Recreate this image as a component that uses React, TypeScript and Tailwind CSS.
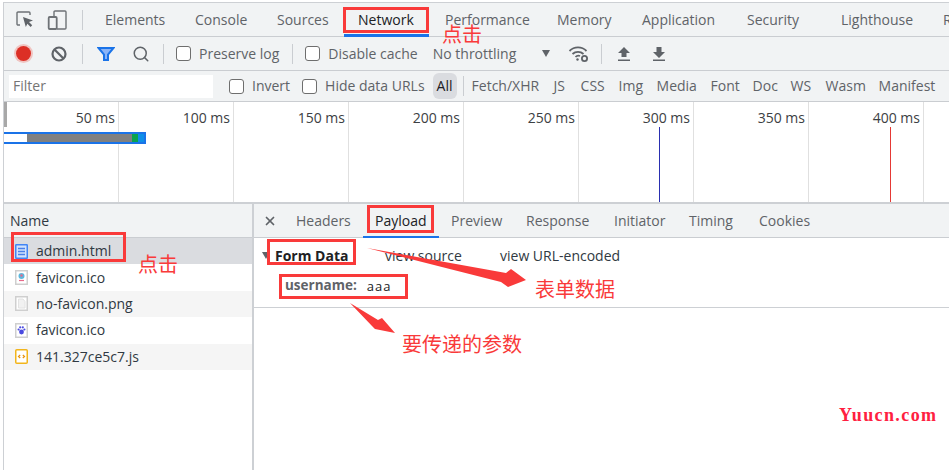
import { Search, X } from "lucide-react";

const FONT = "font-['Open_Sans','Noto_Sans',sans-serif]";

const tabs = [
  { label: "Elements", w: "w-[90px]" },
  { label: "Console", w: "w-[82px]" },
  { label: "Sources", w: "w-[81px]" },
  { label: "Network", w: "w-[87px]", active: true },
  { label: "Performance", w: "w-[112px]" },
  { label: "Memory", w: "w-[85px]" },
  { label: "Application", w: "w-[105px]" },
  { label: "Security", w: "w-[94px]" },
  { label: "Lighthouse", w: "w-[102px]" },
  { label: "R", w: "w-[10px]" },
];

const filters = [
  { label: "Fetch/XHR", w: "w-[82px]" },
  { label: "JS", w: "w-[27px]" },
  { label: "CSS", w: "w-[38px]" },
  { label: "Img", w: "w-[38px]" },
  { label: "Media", w: "w-[54px]" },
  { label: "Font", w: "w-[42px]" },
  { label: "Doc", w: "w-[38px]" },
  { label: "WS", w: "w-[35px]" },
  { label: "Wasm", w: "w-[53px]" },
  { label: "Manifest", w: "w-[62px]" },
];

const ticks = ["50 ms", "100 ms", "150 ms", "200 ms", "250 ms", "300 ms", "350 ms", "400 ms"];

const detailTabs = [
  { label: "Headers", w: "w-[79px]" },
  { label: "Payload", w: "w-[76px]", active: true },
  { label: "Preview", w: "w-[75px]" },
  { label: "Response", w: "w-[88px]" },
  { label: "Initiator", w: "w-[75px]" },
  { label: "Timing", w: "w-[70px]" },
  { label: "Cookies", w: "w-[60px]" },
];

function Checkbox() {
  return <span className="block w-[15px] h-[15px] rounded-[3px] border border-[#6e6e6e] bg-white shrink-0" />;
}

function FileIcon({ kind }: { kind: string }) {
  if (kind === "doc") {
    return (
      <svg width="13" height="15" viewBox="0 0 13 15" className="shrink-0">
        <rect x="0.75" y="0.75" width="11.5" height="13.5" rx="0.5" fill="#d2e3fc" stroke="#4285f4" strokeWidth="1.5" />
        <path d="M3 4.500h7M3 7.500h7M3 10.500h7" stroke="#4a80e8" strokeWidth="1.3" />
      </svg>
    );
  }
  if (kind === "js") {
    return (
      <svg width="13" height="15" viewBox="0 0 13 15" className="shrink-0">
        <rect x="0.75" y="0.75" width="11.5" height="13.5" rx="1" fill="#fff" stroke="#f2b51c" strokeWidth="1.5" />
        <path d="M5.200 6 3.500 7.500 5.200 9M7.800 6l1.700 1.500L7.800 9" fill="none" stroke="#e8930c" strokeWidth="1.200" />
      </svg>
    );
  }
  return (
    <svg width="13" height="15" viewBox="0 0 13 15" className="shrink-0">
      <rect x="0.75" y="0.75" width="11.5" height="13.5" fill="#fff" stroke="#cfcfcf" strokeWidth="1.5" />
      {kind === "fav1" && (
        <>
          <circle cx="6.500" cy="6" r="3" fill="#5cb8de" />
          <circle cx="6.500" cy="5.500" r="1.200" fill="#e86a8a" />
          <path d="M4 10.500h5" stroke="#e86a8a" strokeWidth="1.200" />
        </>
      )}
      {kind === "fav2" && (
        <>
          <circle cx="6.500" cy="9" r="2.400" fill="#4a4ae0" />
          <circle cx="3.600" cy="6.500" r="1.100" fill="#4a4ae0" />
          <circle cx="9.400" cy="6.500" r="1.100" fill="#4a4ae0" />
          <circle cx="5.200" cy="4.300" r="1.100" fill="#4a4ae0" />
          <circle cx="7.800" cy="4.300" r="1.100" fill="#4a4ae0" />
        </>
      )}
      {kind === "blank" && <path d="M3.500 3H8l2 2.500V12H3.500z" fill="#f1f1f1" stroke="#e2e2e2" />}
    </svg>
  );
}

const files = [
  { name: "admin.html", kind: "doc", bg: "bg-[#dadce0]" },
  { name: "favicon.ico", kind: "fav1", bg: "bg-white" },
  { name: "no-favicon.png", kind: "blank", bg: "bg-[#f5f5f5]" },
  { name: "favicon.ico", kind: "fav2", bg: "bg-white" },
  { name: "141.327ce5c7.js", kind: "js", bg: "bg-[#f5f5f5]" },
];

function Arrow({ className, points, w, h }: { className: string; points: string; w: number; h: number }) {
  return (
    <svg className={`absolute ${className}`} width={w} height={h} viewBox={`0 0 ${w} ${h}`}>
      <polygon points={points} fill="#f93a3a" />
    </svg>
  );
}

export default function App() {
  return (
    <div className={`relative w-[949px] h-[470px] overflow-hidden bg-white pt-[2px] pl-[3px] text-[14px] leading-none text-[#5f6368] ${FONT}`}>
      <div className="h-full flex flex-col border-l border-t border-[#cdd0d4]">
        {/* Tabs */}
        <div className="h-[34px] shrink-0 flex items-center bg-[#f1f3f4] border-b border-[#cacdd1]">
          <svg width="20" height="20" viewBox="0 0 20 20" className="shrink-0 ml-[11px] mr-[12px]" fill="none">
            <path d="M5 15H3a1 1 0 0 1-1-1V3a1 1 0 0 1 1-1h11a1 1 0 0 1 1 1v2" stroke="#6e7276" strokeWidth="1.400" />
            <path d="M8 7l10 3.500-4 1.600 3.200 3.200-1.600 1.600-3.200-3.200L10.800 17z" fill="#5f6368" />
          </svg>
          <svg width="20" height="20" viewBox="0 0 20 20" className="shrink-0" fill="none" stroke="#6e7276" strokeWidth="1.400">
            <path d="M7 6V2a1 1 0 0 1 1-1h10a1 1 0 0 1 1 1v16a1 1 0 0 1-1 1H10" />
            <rect x="1.700" y="7" width="8" height="12" rx="1" strokeWidth="1.800" />
          </svg>
          <div className="shrink-0 w-px h-5 bg-[#cacdd1] ml-[15px] mr-[22px]" />
          {tabs.map((t) => (
            <div
              key={t.label}
              className={`${t.w} shrink-0 h-full flex items-center relative whitespace-nowrap ${t.active ? "text-[#202124]" : ""}`}
            >
              {t.label}
              {t.active && <div className="absolute -left-[14px] -bottom-px w-[85px] h-[3px] bg-[#1a73e8]" />}
            </div>
          ))}
        </div>

        {/* Toolbar */}
        <div className="h-[34px] shrink-0 flex items-center bg-[#f1f3f4] border-b border-[#cacdd1]">
          <div className="ml-[12px] w-[15px] h-[15px] rounded-full bg-[#dc2f25] shadow-[0_0_0_2px_#f0c4c1]" />
          <svg width="16" height="16" viewBox="0 0 16 16" fill="none" stroke="#5f6368" strokeWidth="2.200" className="ml-[20px]">
            <circle cx="8" cy="8" r="6.500" />
            <path d="M3.500 3.500l9 9" />
          </svg>
          <div className="w-px h-5 bg-[#cacdd1] ml-[15px]" />
          <svg width="18" height="16" viewBox="0 0 18 16" fill="#8ab4f8" stroke="#1a73e8" strokeWidth="2" className="ml-[14px]">
            <path d="M1.500 2h15L11 8.500V14H7V8.500z" />
          </svg>
          <Search size={18} strokeWidth={2} className="text-[#5f6368] ml-[17px]" />
          <div className="w-px h-5 bg-[#cacdd1] ml-[13px]" />
          <div className="ml-[12px]"><Checkbox /></div>
          <span className="ml-[8px] whitespace-nowrap">Preserve log</span>
          <div className="w-px h-5 bg-[#cacdd1] ml-[13px]" />
          <div className="ml-[12px]"><Checkbox /></div>
          <span className="ml-[8px] whitespace-nowrap">Disable cache</span>
          <span className="ml-[15px] whitespace-nowrap">No throttling</span>
          <div className="ml-[26px] w-0 h-0 border-x-[4px] border-x-transparent border-t-[7px] border-t-[#5f6368]" />
          <svg width="22" height="18" viewBox="0 0 22 18" fill="none" stroke="#5f6368" strokeWidth="1.800" className="ml-[18px]">
            <path d="M1.500 6a12 12 0 0 1 17 0M4.500 9a8 8 0 0 1 11 0M7.500 12a4 4 0 0 1 4.500-1" />
            <circle cx="9.500" cy="14.500" r="1.200" fill="#5f6368" stroke="none" />
            <circle cx="16.500" cy="13.500" r="2.600" strokeWidth="1.800" />
          </svg>
          <div className="w-px h-5 bg-[#cacdd1] ml-[11px]" />
          <svg width="14" height="16" viewBox="0 0 14 16" fill="#5f6368" className="ml-[15px]">
            <path d="M7 1l6 6H9.500v4h-5V7H1zM1 13.500h12V15H1z" />
          </svg>
          <svg width="14" height="16" viewBox="0 0 14 16" fill="#5f6368" className="ml-[21px]">
            <path d="M4.500 1h5v5H13l-6 6-6-6h3.500zM1 13.500h12V15H1z" />
          </svg>
        </div>

        {/* Filter */}
        <div className="h-[31px] shrink-0 flex items-center bg-[#f1f3f4] border-b border-[#cacdd1]">
          <div className="ml-[5px] w-[204px] h-[23px] bg-white flex items-center pl-[4px] text-[#757575]">Filter</div>
          <div className="ml-[16px]"><Checkbox /></div>
          <span className="ml-[8px]">Invert</span>
          <div className="ml-[12px]"><Checkbox /></div>
          <span className="ml-[8px] whitespace-nowrap">Hide data URLs</span>
          <span className="ml-[8px] w-[24px] h-[26px] rounded-[6px] bg-[#dadce0] flex items-center justify-center text-[#202124]">All</span>
          <div className="w-px h-5 bg-[#cacdd1] ml-[6px] mr-[8px]" />
          {filters.map((f) => (
            <span key={f.label} className={`${f.w} shrink-0 whitespace-nowrap`}>{f.label}</span>
          ))}
        </div>

        {/* Overview timeline */}
        <div className="h-[102px] shrink-0 relative bg-white border-b-2 border-[#cdd0d4]">
          <div className="flex h-full">
            {ticks.map((t) => (
              <div key={t} className="w-[115px] shrink-0 h-full border-r border-[#e0e0e0] pt-[9px] pr-[3px] text-right text-[#3c4043] whitespace-nowrap">
                {t}
              </div>
            ))}
          </div>
          <div className="absolute left-0 top-0 w-[3px] h-[25px] bg-[#a8a8a8]" />
          <div className="absolute left-0 top-[30px] w-[142px] h-[12px] bg-[#1a73e8] py-[2px] pr-[2px] flex">
            <div className="w-[23px] bg-white" />
            <div className="w-[105px] bg-[#808080]" />
            <div className="w-[6px] bg-[#0aa34f]" />
            <div className="flex-1 bg-[#0e8fe8]" />
          </div>
          <div className="absolute left-[655px] top-[25px] w-px h-[75px] bg-[#2a2fb0]" />
          <div className="absolute left-[886px] top-[25px] w-px h-[75px] bg-[#e53935]" />
        </div>

        {/* Bottom split */}
        <div className="flex-1 flex min-h-0">
          <div className="w-[250px] shrink-0 border-r-2 border-[#cdd0d4]">
            <div className="h-[34px] bg-[#f1f3f4] border-b border-[#cacdd1] flex items-end pl-[6px] pb-[9px] text-[#303942]">Name</div>
            {files.map((f) => (
              <div key={f.name + f.kind} className={`h-[26.400px] flex items-center pl-[11px] gap-[8px] ${f.bg} text-[#303942]`}>
                <FileIcon kind={f.kind} />
                <span className="whitespace-nowrap">{f.name}</span>
              </div>
            ))}
          </div>
          <div className="flex-1 min-w-0">
            <div className="h-[34px] bg-[#f1f3f4] border-b border-[#cacdd1] flex items-center">
              <X size={14} strokeWidth={3} className="ml-[9px] mr-[19px] text-[#5f6368]" />
              {detailTabs.map((t) => (
                <div key={t.label} className={`${t.w} shrink-0 h-full flex items-center relative ${t.active ? "text-[#202124]" : ""}`}>
                  {t.label}
                  {t.active && <div className="absolute -left-[12px] -bottom-px w-[76px] h-[2px] bg-[#1a73e8]" />}
                </div>
              ))}
            </div>
            <div className="h-[70px] border-b border-[#cdd0d4] relative">
              <div className="flex items-center h-[35px]">
                <div className="ml-[8px] w-0 h-0 border-x-[4px] border-x-transparent border-t-[7px] border-t-[#5f6368]" />
                <span className="ml-[5px] w-[110px] font-bold text-[#202124]">Form Data</span>
                <span className="w-[115px] text-[#303942]">view source</span>
                <span className="whitespace-nowrap text-[#303942]">view URL-encoded</span>
              </div>
              <div className="flex items-center h-[26px] pl-[31px]">
                <span className="font-bold text-[#5f6368] text-[13.500px]">username:</span>
                <span className="ml-[10px] text-[#202124] text-[13px] tracking-[1px]">aaa</span>
              </div>
            </div>
          </div>
        </div>
      </div>

      {/* Red annotations */}
      <div className="absolute left-[343px] top-[7px] w-[86px] h-[26px] border-[3px] border-[#f93a3a]" />
      <div className="absolute left-[11px] top-[232px] w-[115px] h-[30px] border-[3px] border-[#f93a3a]" />
      <div className="absolute left-[367px] top-[205px] w-[67px] h-[28px] border-[3px] border-[#f93a3a]" />
      <div className="absolute left-[267px] top-[239px] w-[89px] h-[26px] border-[3px] border-[#f93a3a]" />
      <div className="absolute left-[279px] top-[274px] w-[129px] h-[25px] border-[3px] border-[#f93a3a]" />
      <Arrow className="left-[365px] top-[246px]" w={165} h={44} points="2,2 141,27 146,23 161,34 143,41 136,36" />
      <Arrow className="left-[348px] top-[301px]" w={50} h={36} points="2,2 30,19 34,17 47,32 27,28 24,25" />
      <span className="absolute left-[442px] top-[23px] text-[20px] leading-[22px] text-[#f93a3a] font-['Noto_Sans_CJK_SC',sans-serif]">点击</span>
      <span className="absolute left-[138px] top-[253px] text-[20px] leading-[22px] text-[#f93a3a] font-['Noto_Sans_CJK_SC',sans-serif]">点击</span>
      <span className="absolute left-[535px] top-[278px] text-[20px] leading-[22px] text-[#f93a3a] font-['Noto_Sans_CJK_SC',sans-serif]">表单数据</span>
      <span className="absolute left-[402px] top-[333px] text-[20px] leading-[22px] text-[#f93a3a] font-['Noto_Sans_CJK_SC',sans-serif]">要传递的参数</span>
      <span className="absolute left-[839px] top-[405px] text-[18px] font-bold tracking-[1.400px] leading-[20px] text-[#ff2040] font-['Liberation_Serif',serif]">Yuucn.com</span>
    </div>
  );
}
